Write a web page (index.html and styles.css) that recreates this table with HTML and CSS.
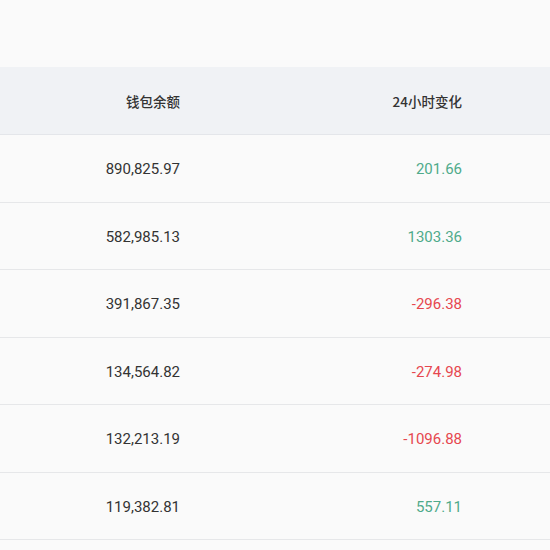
FILE: index.html
```html
<!DOCTYPE html>
<html lang="zh">
<head>
<meta charset="utf-8">
<link rel="stylesheet" href="styles.css">
</head>
<body>
<div class="page">
  <div class="table">
    <div class="row head">
      <div class="cell"></div>
      <div class="cell num">钱包余额</div>
      <div class="cell num">24小时变化</div>
      <div class="cell"></div>
    </div>
    <div class="row">
      <div class="cell"></div>
      <div class="cell num">890,825.97</div>
      <div class="cell num up">201.66</div>
      <div class="cell"></div>
    </div>
    <div class="row">
      <div class="cell"></div>
      <div class="cell num">582,985.13</div>
      <div class="cell num up">1303.36</div>
      <div class="cell"></div>
    </div>
    <div class="row">
      <div class="cell"></div>
      <div class="cell num">391,867.35</div>
      <div class="cell num down">-296.38</div>
      <div class="cell"></div>
    </div>
    <div class="row">
      <div class="cell"></div>
      <div class="cell num">134,564.82</div>
      <div class="cell num down">-274.98</div>
      <div class="cell"></div>
    </div>
    <div class="row">
      <div class="cell"></div>
      <div class="cell num">132,213.19</div>
      <div class="cell num down">-1096.88</div>
      <div class="cell"></div>
    </div>
    <div class="row">
      <div class="cell"></div>
      <div class="cell num">119,382.81</div>
      <div class="cell num up">557.11</div>
      <div class="cell"></div>
    </div>
  </div>
</div>
</body>
</html>
```
FILE: styles.css
```css
html, body {
  margin: 0;
  padding: 0;
  background: #fafafa;
}
.page {
  padding-top: 67px;
  width: 550px;
  height: 550px;
  overflow: hidden;
  box-sizing: border-box;
  font-family: Roboto, "Noto Sans CJK SC", sans-serif;
}
.table {
  display: flex;
  flex-direction: column;
}
.row {
  display: grid;
  grid-template-columns: 96px 100px 282px 72px;
  height: 67.5px;
  box-sizing: border-box;
  border-bottom: 1px solid #e6e7e9;
  align-items: center;
  font-size: 15px;
  color: #333333;
}
.row .cell.num {
  padding-top: 2px;
}
.row.head {
  height: 68px;
  background: #f0f2f5;
  border-bottom: 1px solid #e4e6ea;
  font-family: "Noto Sans CJK SC", sans-serif;
  font-size: 13.5px;
  font-weight: 500;
  color: #333333;
}
.row.head .cell.num {
  padding-top: 0;
}
.cell.num {
  text-align: right;
  padding-right: 16px;
}
.up {
  color: #4faa8b;
}
.down {
  color: #e6474f;
}
```
